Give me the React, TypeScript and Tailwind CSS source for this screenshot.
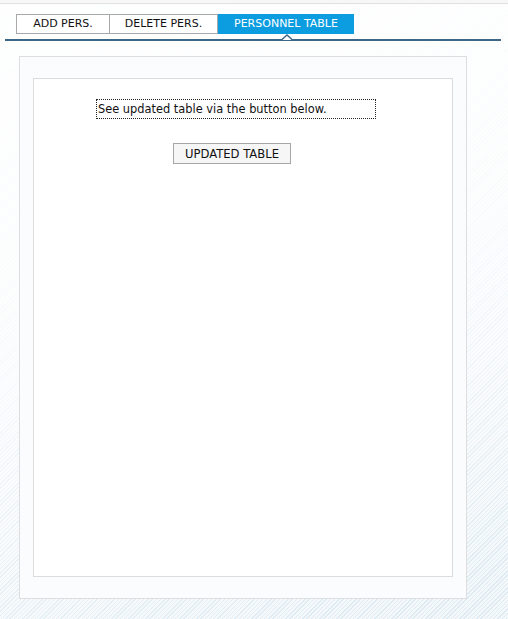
export default function App() {
  return (
    <div className="min-h-screen w-full bg-[linear-gradient(165deg,rgba(255,255,255,0.97)_0%,rgba(255,255,255,0.8)_50%,rgba(255,255,255,0.15)_95%),repeating-linear-gradient(135deg,#d8e7f0_0px,#d8e7f0_1px,#f3f7fa_1px,#f3f7fa_3px)] font-['DejaVu_Sans',Verdana,sans-serif] text-[11px] text-[#111]">
      <div className="h-[3px] bg-[#f7f7f7]" />
      <div className="h-px bg-[#e1e1e1]" />

      <div className="flex pl-[16px] pt-[10px]">
        <button className="flex h-[20px] w-[94px] items-center justify-center border border-[#a9a9a9] bg-white pt-px">
          ADD PERS.
        </button>
        <button className="-ml-px flex h-[20px] w-[109px] items-center justify-center border border-[#a9a9a9] bg-white pt-px">
          DELETE PERS.
        </button>
        <button className="flex h-[20px] w-[136px] items-center justify-center bg-[#0c9de0] pt-px text-white">
          PERSONNEL TABLE
        </button>
      </div>

      <div className="relative mx-[5px] mt-[5px] h-[2px] w-[496px] bg-[#3d6787]">
        <svg
          className="absolute left-[276px] top-[-5px]"
          width="12"
          height="7"
          viewBox="0 0 12 7"
        >
          <path d="M0.5 6 L6 1 L11.5 6 Z" fill="#ffffff" />
          <path d="M0.5 6 L6 1 L11.5 6" fill="none" stroke="#3d6787" strokeWidth="1.4" />
        </svg>
      </div>

      <div className="ml-[19px] mt-[15px] h-[543px] w-[448px] border border-[#dedede] bg-[#fbfcfd] pl-[13px] pt-[21px]">
        <div className="h-[499px] w-[420px] border border-[#dcdcdc] bg-white">
          <div className="ml-[62px] mt-[20px] flex h-[20px] w-[280px] items-center border border-dotted border-[#222] pl-px pt-[2px] text-[11.4px]">
            See updated table via the button below.
          </div>
          <button className="ml-[139px] mt-[24px] flex h-[21px] w-[118px] items-center justify-center border border-[#a6a6a6] bg-[#f6f6f6] pt-[2px] text-[11.6px]">
            UPDATED TABLE
          </button>
        </div>
      </div>
    </div>
  );
}
